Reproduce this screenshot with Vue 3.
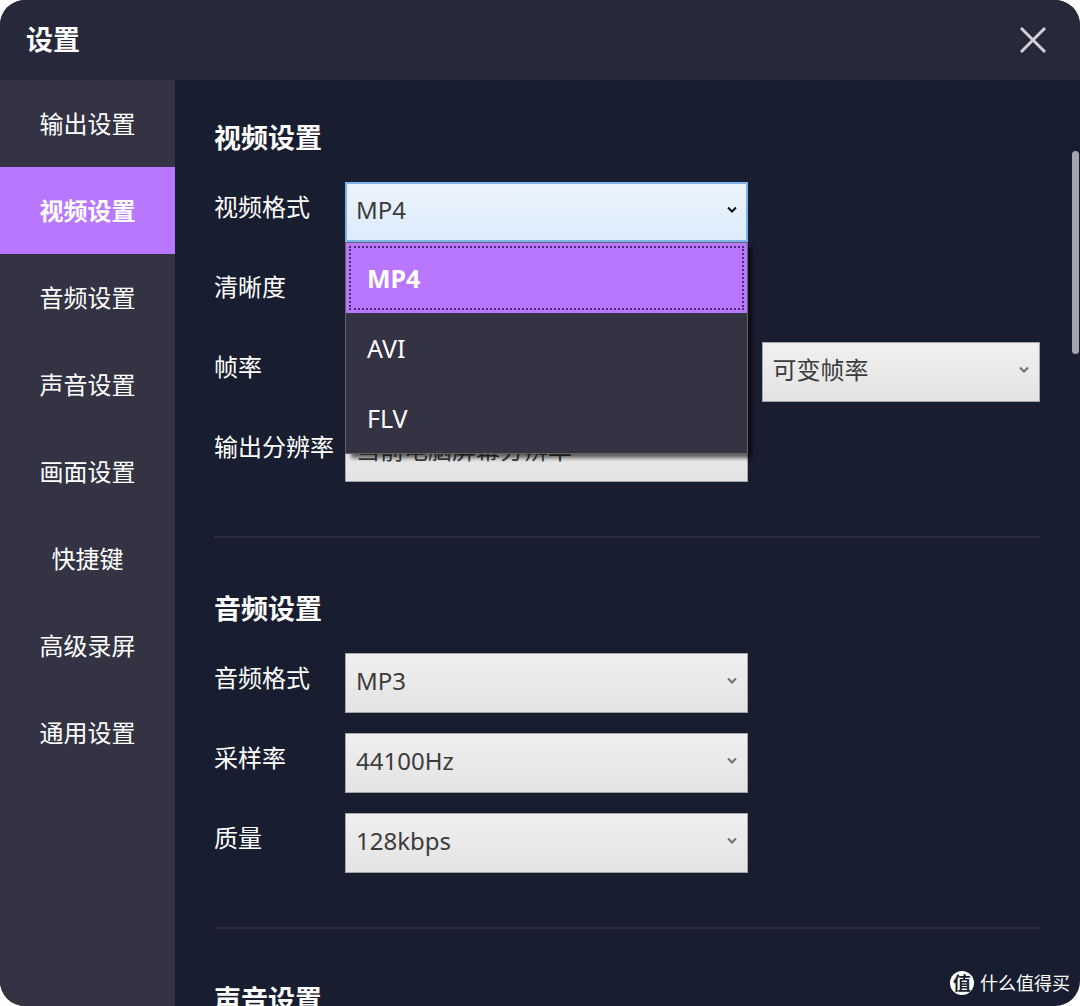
<script setup>
import { ref } from 'vue';

const menus = ['输出设置', '视频设置', '音频设置', '声音设置', '画面设置', '快捷键', '高级录屏', '通用设置'];
const currentMenu = ref('视频设置');

const formats = ['MP4', 'AVI', 'FLV'];
const videoFormat = ref('MP4');
const formatOpen = ref(true);

const videoRows = [
	{ id: 'video-format', label: '视频格式', list: true },
	{ id: 'definition', label: '清晰度', options: [] },
	{ id: 'frame-rate', label: '帧率', options: [], extra: ['可变帧率'] },
	{ id: 'resolution', label: '输出分辨率', options: ['当前电脑屏幕分辨率'] },
];

const audioRows = [
	{ id: 'audio-format', label: '音频格式', options: ['MP3'] },
	{ id: 'sample-rate', label: '采样率', options: ['44100Hz'] },
	{ id: 'quality', label: '质量', options: ['128kbps'] },
];

const selectFormat = format => {
	videoFormat.value = format;
	formatOpen.value = false;
};
</script>

<template>
	<div class="window">
		<header class="title_bar">
			<h1>设置</h1>
			<button class="close" type="button" aria-label="关闭">
				<svg viewBox="0 0 28 28" width="28" height="28">
					<path d="M2 2 26 26M26 2 2 26" fill="none" stroke="#d2d2d6" stroke-width="3" />
				</svg>
			</button>
		</header>

		<div class="body">
			<nav class="side">
				<button
					v-for="menu in menus"
					:key="menu"
					type="button"
					:class="{ on: menu === currentMenu }"
					@click="currentMenu = menu"
				>
					{{ menu }}
				</button>
			</nav>

			<main class="panel">
				<section>
					<h2>视频设置</h2>
					<div v-for="row in videoRows" :key="row.id" class="row">
						<label :for="row.id">{{ row.label }}</label>
						<div v-if="row.list" class="select_box open">
							<select :id="row.id" v-model="videoFormat" @mousedown.prevent="formatOpen = !formatOpen">
								<option v-for="format in formats" :key="format">{{ format }}</option>
							</select>
							<svg class="arrow" viewBox="0 0 10 8" width="10" height="8">
								<path d="M1 1.5 5 5.5 9 1.5" fill="none" stroke="currentColor" stroke-width="2" />
							</svg>
							<ul v-if="formatOpen" class="list">
								<li v-for="format in formats" :key="format">
									<button type="button" :class="{ on: format === videoFormat }" @click="selectFormat(format)">
										{{ format }}
									</button>
								</li>
							</ul>
						</div>
						<div v-else class="select_box">
							<select :id="row.id">
								<option v-for="option in row.options" :key="option">{{ option }}</option>
							</select>
							<svg class="arrow" viewBox="0 0 10 8" width="10" height="8">
								<path d="M1 1.5 5 5.5 9 1.5" fill="none" stroke="currentColor" stroke-width="2" />
							</svg>
						</div>
						<div v-if="row.extra" class="select_box">
							<select :aria-label="row.label">
								<option v-for="option in row.extra" :key="option">{{ option }}</option>
							</select>
							<svg class="arrow" viewBox="0 0 10 8" width="10" height="8">
								<path d="M1 1.5 5 5.5 9 1.5" fill="none" stroke="currentColor" stroke-width="2" />
							</svg>
						</div>
					</div>
				</section>

				<section>
					<h2>音频设置</h2>
					<div v-for="row in audioRows" :key="row.id" class="row">
						<label :for="row.id">{{ row.label }}</label>
						<div class="select_box">
							<select :id="row.id">
								<option v-for="option in row.options" :key="option">{{ option }}</option>
							</select>
							<svg class="arrow" viewBox="0 0 10 8" width="10" height="8">
								<path d="M1 1.5 5 5.5 9 1.5" fill="none" stroke="currentColor" stroke-width="2" />
							</svg>
						</div>
					</div>
				</section>

				<section>
					<h2>声音设置</h2>
				</section>
			</main>

			<div class="scroll">
				<div class="thumb"></div>
			</div>
		</div>

		<div class="mark">
			<span class="logo">值</span>
			<span>什么值得买</span>
		</div>
	</div>
</template>

<style>
body {
	background: #fff;
}
</style>

<style scoped>
.window {
	display: flex;
	position: relative;
	flex-direction: column;
	height: 100vh;
	overflow: hidden;
	background: #191d30;
	border-radius: 25px;
	color: #fff;
	font-family: 'Noto Sans', 'Noto Sans CJK SC', sans-serif;
	font-size: 24px;
	line-height: 32px;
}
button,
select {
	margin: 0;
	border: 0;
	border-radius: 0;
	color: inherit;
	font: inherit;
	cursor: pointer;
}
h1,
h2 {
	margin: 0;
	font-size: 27px;
	font-weight: 700;
	line-height: 40px;
}
.title_bar {
	display: flex;
	flex: none;
	align-items: center;
	justify-content: space-between;
	height: 80px;
	padding: 0 33px 0 26px;
	box-sizing: border-box;
	background: #28283b;
}
.close {
	display: flex;
	padding: 0;
	background: none;
}
.body {
	display: flex;
	flex: 1;
	min-height: 0;
}
.side {
	display: flex;
	flex: none;
	flex-direction: column;
	width: 175px;
	background: #333344;
}
.side button {
	height: 87px;
	padding: 0;
	background: none;
}
.side button.on {
	background: #b977ff;
	font-weight: 700;
}
.panel {
	flex: 1;
	min-width: 0;
	overflow: hidden;
	padding: 0 32px 0 39px;
}
section {
	display: flex;
	flex-direction: column;
	gap: 20px;
	padding: 38px 0 54px;
	border-bottom: 2px solid #2a2d40;
}
section + section {
	padding-top: 51px;
}
h2 {
	margin-bottom: 4px;
}
.row {
	display: grid;
	grid-template-columns: 117px 402fr 278fr;
	gap: 14px;
	align-items: center;
}
label {
	padding-bottom: 10px;
	white-space: nowrap;
}
.select_box {
	position: relative;
	color: #707070;
}
.select_box.open {
	color: #111;
}
select {
	display: block;
	width: 100%;
	height: 60px;
	padding: 0 40px 4px 10px;
	box-sizing: border-box;
	appearance: none;
	background: linear-gradient(#f0f0f0, #e3e3e3);
	border: 1px solid #a5a5a5;
	color: #3c3c3c;
	outline: 0;
}
.open select {
	padding-left: 9px;
	background: linear-gradient(#ecf4fc, #dcecfc);
	border: 2px solid #7eb4ea;
}
.arrow {
	position: absolute;
	top: 24px;
	right: 11px;
	pointer-events: none;
}
.list {
	position: absolute;
	top: 100%;
	left: 0;
	right: 0;
	z-index: 1;
	margin: 0;
	padding: 0;
	background: #333344;
	border: 1px solid #646464;
	box-shadow: 5px 5px 4px -1px rgba(0, 0, 0, 0.6);
	font-size: 25px;
	list-style: none;
}
.list button {
	display: block;
	width: 100%;
	height: 70px;
	padding: 0 21px;
	background: none;
	color: #fff;
	text-align: left;
}
.list button.on {
	background: #b977ff;
	font-weight: 700;
	outline: 2px dotted #4b2c70;
	outline-offset: -5px;
}
.scroll {
	flex: none;
	width: 7px;
	margin-right: 1px;
}
.thumb {
	height: 203px;
	margin-top: 71px;
	background: #a3a5ac;
	border-radius: 4px;
}
.mark {
	display: flex;
	position: absolute;
	right: 10px;
	bottom: 11px;
	gap: 6px;
	align-items: center;
	font-size: 18px;
	line-height: 24px;
}
.logo {
	width: 24px;
	height: 24px;
	background: #fff;
	border-radius: 50%;
	color: #191d30;
	font-weight: 700;
	text-align: center;
}
</style>
